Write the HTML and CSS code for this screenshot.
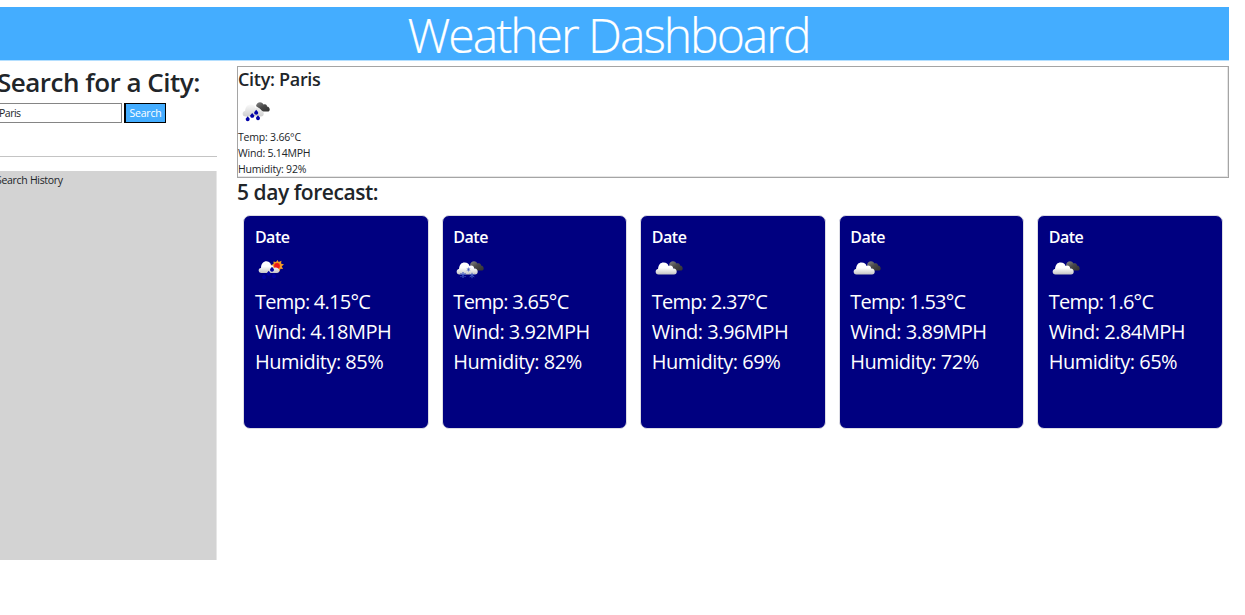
FILE: index.html
```html
<!DOCTYPE html>
<html lang="en">
<head>
<meta charset="utf-8">
<title>Weather Dashboard</title>
<link rel="stylesheet" href="styles.css">
</head>
<body>
<svg class="defs" width="0" height="0" aria-hidden="true">
  <defs>
    <linearGradient id="white" x1="0" y1="0" x2="0" y2="1"><stop offset=".45" stop-color="#fff"/><stop offset="1" stop-color="#c4c4c4"/></linearGradient>
    <linearGradient id="shade" x1="0" y1="0" x2="0" y2="1"><stop offset="0" stop-color="#fafafa"/><stop offset="1" stop-color="#cfcfcf"/></linearGradient>
    <linearGradient id="dark" x1="0" y1="0" x2="1" y2="1"><stop offset="0" stop-color="#888"/><stop offset=".5" stop-color="#484848"/><stop offset="1" stop-color="#303030"/></linearGradient>
    <path id="cloud" d="M3.500 13.500C0 13.500-.4 8.500 3 8C3.500 3.500 5.500 1.500 8.500 1.500C11.500 1.500 13 3 13.500 5C16 4 18 5 18.200 7.500C22.500 7 23 13.500 19 13.500Z"/>
    <path id="back" d="M14 4C14.500 0 19.500-1.500 21.500 2.500C24 1.500 25 3 25 4.500C28 4.500 29 9.500 25.500 9.500H20C18.500 6 16.500 6.500 14 4Z"/>
    <path id="drop" d="M0-2.800L1.800-.4C3 3-3 3-1.800-.4Z"/>
    <path id="flake" d="M0-3V3M-2.600-1.500L2.600 1.500M-2.600 1.500L2.600-1.500"/>
    <symbol id="clouds" viewBox="0 0 30 22"><use href="#back" fill="url(#dark)" y="1"/><use href="#cloud" fill="url(#white)" y="1"/></symbol>
    <symbol id="rain" viewBox="0 0 30 22"><use href="#back" fill="url(#dark)" y="1"/><use href="#cloud" fill="url(#shade)" y="2"/><g fill="#0000a8"><use href="#drop" x="5.700" y="18"/><use href="#drop" x="10.200" y="14.700"/><use href="#drop" x="14.200" y="11.500"/><use href="#drop" x="16" y="17"/></g></symbol>
    <symbol id="snow" viewBox="0 0 30 22"><use href="#back" fill="url(#dark)" y="1"/><use href="#cloud" fill="url(#white)" y="1"/><g stroke="#4058c0" stroke-width="1.100"><use href="#flake" x="7" y="15"/><g transform="translate(12.500 9.500) scale(.65)"><use href="#flake"/></g><g transform="translate(16 15.500) scale(.9)"><use href="#flake"/></g></g></symbol>
    <symbol id="sunrain" viewBox="0 0 30 22"><path d="M19.500 0L20.700 2L23.500 .8L23 3.500L26 4.500L23.700 6.300L25 9L22.500 8.800L21.500 11.500L18.500 10L15 10L15 7L13 5L15.500 4L15.500 1.500L18 2Z" fill="#f59a23"/><circle cx="19" cy="6" r="2.900" fill="#f01818"/><path d="M3.500 13C-.2 12.500-.2 8.500 3 8C3 3.500 5.500 1.200 8.500 1.200C11.500 1.200 13 3.500 13 5.500C14.500 5 15.500 6 15.500 8L17.500 7.500C21.500 7.500 23 12.500 19 13Z" fill="url(#white)"/><g fill="#0000a0"><use href="#drop" x="6" y="17"/><use href="#drop" x="10.700" y="13.500"/><use href="#drop" x="14" y="9.500"/><use href="#drop" x="16" y="16"/></g></symbol>
  </defs>
</svg>
<header class="banner"><h1>Weather Dashboard</h1></header>
<main class="layout">
  <aside class="sidebar">
    <h2 class="side-title">Search for a City:</h2>
    <form class="search"><input class="city-input" type="text" value="Paris"><button class="search-btn" type="button">Search</button></form>
    <hr class="rule">
    <div class="history">Search History</div>
  </aside>
  <section class="content">
    <div class="current">
      <h3 class="city">City: Paris</h3>
      <svg class="icon"><use href="#rain"/></svg>
      <p>Temp: 3.66°C</p><p>Wind: 5.14MPH</p><p>Humidity: 92%</p>
    </div>
    <h3 class="forecast-title">5 day forecast:</h3>
    <div class="cards">
      <article class="card"><h4>Date</h4><svg class="icon"><use href="#sunrain"/></svg><p class="temp">Temp: 4.15°C</p><p>Wind: 4.18MPH</p><p>Humidity: 85%</p></article>
      <article class="card"><h4>Date</h4><svg class="icon"><use href="#snow"/></svg><p class="temp">Temp: 3.65°C</p><p>Wind: 3.92MPH</p><p>Humidity: 82%</p></article>
      <article class="card"><h4>Date</h4><svg class="icon"><use href="#clouds"/></svg><p class="temp">Temp: 2.37°C</p><p>Wind: 3.96MPH</p><p>Humidity: 69%</p></article>
      <article class="card"><h4>Date</h4><svg class="icon"><use href="#clouds"/></svg><p class="temp">Temp: 1.53°C</p><p>Wind: 3.89MPH</p><p>Humidity: 72%</p></article>
      <article class="card"><h4>Date</h4><svg class="icon"><use href="#clouds"/></svg><p class="temp">Temp: 1.6°C</p><p>Wind: 2.84MPH</p><p>Humidity: 65%</p></article>
    </div>
  </section>
</main>
</body>
</html>
```
FILE: styles.css
```css
* { box-sizing: border-box; }
body { margin: 0; padding-top: 7px; overflow: hidden; background: #fff; color: #212529; font-family: "Open Sans", "Noto Sans", sans-serif; font-size: 10.5px; }
h1, h2, h3, h4, p { margin: 0; white-space: nowrap; }
.defs { display: block; }
.banner { width: 1229px; height: 54px; background: #44adff; border-bottom: 1px solid #b4dfff; text-align: center; color: #fff; }
.banner h1 { font-size: 48px; line-height: 56px; font-weight: 300; letter-spacing: -2px; padding-right: 12px; -webkit-text-stroke: 0.2px #fff; }
.layout { display: flex; width: 1229px; gap: 20px; padding-top: 5px; }
.sidebar { width: 217px; overflow: hidden; }
.side-title { margin-left: -3px; font-size: 26px; line-height: 33px; padding-bottom: 1px; font-weight: 600; letter-spacing: -0.5px; }
.search { display: flex; gap: 2px; margin-top: 3px; height: 20px; }
.city-input { width: 124px; margin-left: -2px; padding: 0; border: 1px solid #858585; font: inherit; color: #212529; letter-spacing: -0.5px; }
.search-btn { width: 42px; padding: 0; border: 2px solid #000; border-width: 1px 1px 1px 2px; outline: 0; background: #44adff; color: #fff; font: inherit; letter-spacing: -0.2px; line-height: 17px; }
.rule { height: 1px; margin: 33px 0 14px; border: 0; background: #c4c4c4; }
.history { height: 389px; background: #d3d3d3; border-right: 1px solid #e6e6e6; line-height: 18px; text-indent: -4px; letter-spacing: -0.3px; }
.content { width: 992px; }
.current { height: 112px; border: 1px solid #a5a5a5; box-shadow: inset -1px -1px #e6e6e6; }
.city { font-size: 18px; line-height: 24px; padding-bottom: 2px; font-weight: 600; letter-spacing: -0.3px; }
.icon { display: block; width: 30px; height: 22px; }
.current .icon { margin: 8px 0 6px 4px; }
.current p { line-height: 16px; letter-spacing: -0.2px; }
.forecast-title { font-size: 21px; line-height: 28px; font-weight: 600; letter-spacing: -0.45px; }
.cards { display: flex; gap: 13.100px; padding: 9px 6.400px 0; }
.card { flex: 1; height: 214px; padding: 8px 0 0 10.500px; border: 1px solid #dcdce4; border-radius: 7px; background: #000080; color: #fff; }
.card h4 { font-size: 16px; line-height: 26px; font-weight: 600; letter-spacing: -0.5px; }
.card .icon { margin: 10px 0 5px 3px; }
.card p { font-size: 20px; line-height: 30px; letter-spacing: -0.5px; }
.card .temp { letter-spacing: -0.75px; }
```
